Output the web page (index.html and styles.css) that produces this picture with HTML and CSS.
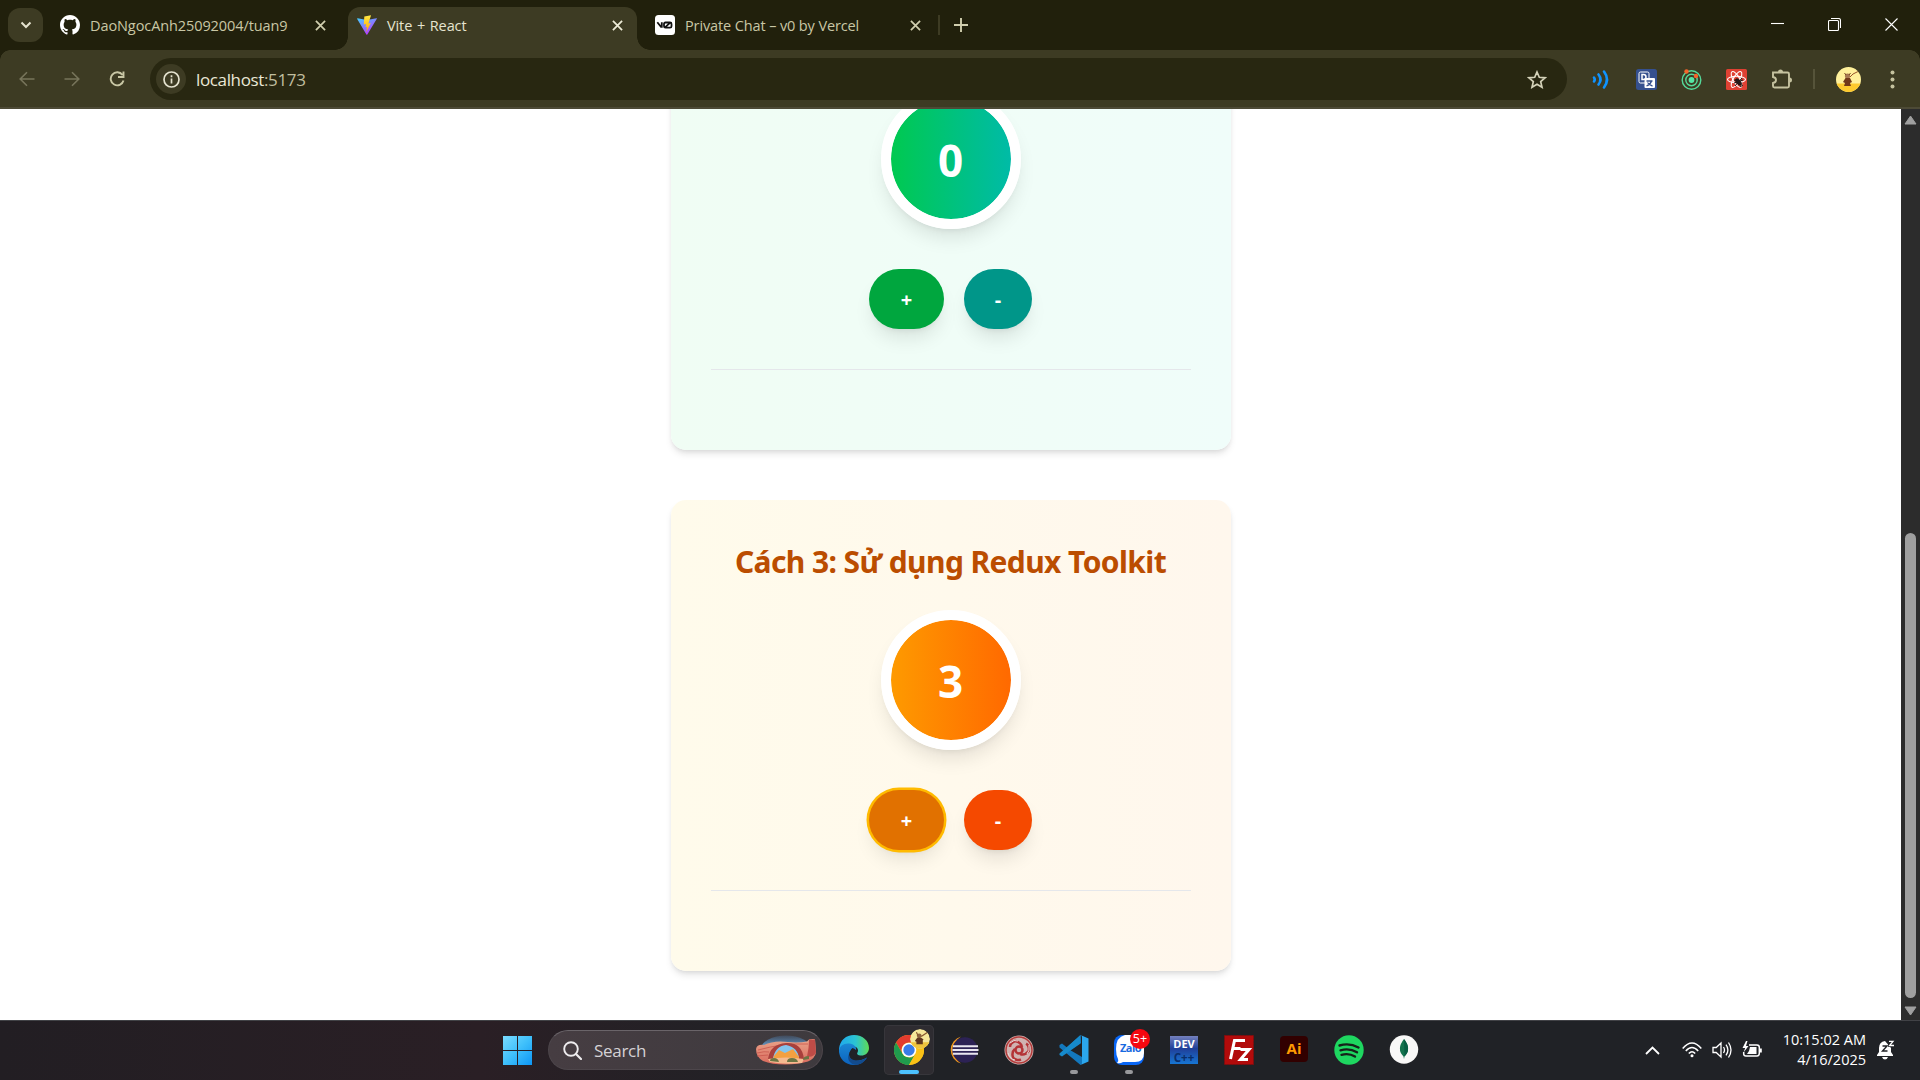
FILE: index.html
```html
<!DOCTYPE html>
<html lang="vi">
<head>
<meta charset="utf-8">
<title>Vite + React</title>
<link rel="stylesheet" href="styles.css">
</head>
<body>
<div class="screen">
  <header class="tabstrip">
    <div class="tab-search"><svg width="12" height="8" viewBox="0 0 12 8"><path d="M1.5 1.5 6 6l4.500-4.500" fill="none" stroke="#e5e3cf" stroke-width="2"/></svg></div>
    <div class="tab tab-first">
      <svg class="fav" viewBox="0 0 16 16"><path fill="#fff" d="M8 0C3.580 0 0 3.580 0 8c0 3.540 2.290 6.530 5.470 7.590.4.070.55-.17.55-.38 0-.19-.01-.82-.01-1.490-2.010.37-2.530-.49-2.690-.94-.09-.23-.48-.94-.82-1.130-.28-.15-.68-.52-.01-.53.63-.01 1.080.58 1.230.82.72 1.210 1.870.87 2.330.66.07-.52.28-.87.51-1.070-1.780-.2-3.640-.89-3.640-3.950 0-.87.31-1.590.82-2.150-.08-.2-.36-1.020.08-2.120 0 0 .67-.21 2.200.82.64-.18 1.320-.27 2-.27s1.360.09 2 .27c1.530-1.040 2.200-.82 2.200-.82.44 1.100.16 1.920.08 2.120.51.56.82 1.270.82 2.150 0 3.070-1.870 3.750-3.650 3.950.29.25.54.73.54 1.480 0 1.070-.01 1.930-.01 2.200 0 .21.15.46.55.38A8.010 8.010 0 0 0 16 8c0-4.420-3.580-8-8-8z"/></svg>
      <span class="tab-title t-git">DaoNgocAnh25092004/tuan9</span>
      <svg class="tab-close" viewBox="0 0 12 12"><path d="M1 1l10 10M11 1 1 11"/></svg>
    </div>
    <div class="tab tab-active">
      <svg class="fav" viewBox="0 0 32 32"><defs><linearGradient id="vg" x1="0" y1="0" x2=".6" y2="1"><stop offset="0" stop-color="#41d1ff"/><stop offset="1" stop-color="#bd34fe"/></linearGradient><linearGradient id="vy" x1="0" y1="0" x2="0" y2="1"><stop offset="0" stop-color="#ffea45"/><stop offset="1" stop-color="#ffa800"/></linearGradient></defs><path d="M1 5 16 8 31 5c1 0 1 1 .5 1.500L16.500 31c-.5 1-1 1-1.500 0L.3 6.300C0 5.500.3 5 1 5z" fill="url(#vg)"/><path d="M22.500.2 11.700 2.300l-.8 12.300c0 .4.300.600.700.500l3-.7-1 5.200 2.500-.6-1.400 8.500 7.300-14.600-3.800.600z" fill="url(#vy)"/></svg>
      <span class="tab-title t-vite">Vite + React</span>
      <svg class="tab-close" viewBox="0 0 12 12"><path d="M1 1l10 10M11 1 1 11"/></svg>
    </div>
    <div class="tab tab-last">
      <svg class="fav" viewBox="0 0 20 20"><rect width="20" height="20" rx="3.500" fill="#fff"/><path d="M2.300 7.300 6 11.800h.8V7.300M9 9q0-1.500 1.500-1.500H15q1.500 0 1.500 1.500v2.200q0 1.500-1.500 1.500h-4.500Q9 12.700 9 11.200zM10 12.300l5-4.500" fill="none" stroke="#111" stroke-width="1.800"/></svg>
      <span class="tab-title t-v0">Private Chat – v0 by Vercel</span>
      <svg class="tab-close" viewBox="0 0 12 12"><path d="M1 1l10 10M11 1 1 11"/></svg>
    </div>
    <i class="tab-sep"></i>
    <svg class="new-tab" width="14" height="14" viewBox="0 0 14 14"><path d="M7 0v14M0 7h14" stroke="#d0ceae" stroke-width="1.900"/></svg>
    <div class="window-controls">
      <svg width="13" height="13" viewBox="0 0 13 13"><path d="M0 5.500h13"/></svg>
      <svg width="13" height="13" viewBox="0 0 13 13"><rect x=".5" y="2.500" width="10" height="10" rx="1"/><path d="M3 .5h7.500a2 2 0 0 1 2 2V10"/></svg>
      <svg width="13" height="13" viewBox="0 0 13 13"><path d="m.5.5 12 12m0-12-12 12"/></svg>
    </div>
  </header>

  <nav class="toolbar">
    <svg class="nav-icon dim" viewBox="0 0 16 16"><path d="M15.500 8H1.500M8 1.200 1.200 8 8 14.800"/></svg>
    <svg class="nav-icon dim" viewBox="0 0 16 16"><path d="M.5 8h14M8 1.200 14.800 8 8 14.800"/></svg>
    <svg class="nav-icon" viewBox="0 0 16 16"><path d="M13.500 4A6.500 6.500 0 1 0 14.500 9.500M14.500.5V6H9"/></svg>
    <div class="omnibox">
      <span class="site-info"><svg width="17" height="17" viewBox="0 0 17 17"><circle cx="8.500" cy="8.500" r="7.500" fill="none" stroke="#e5e3cf" stroke-width="1.700"/><path d="M8.500 7.500v5M8.500 4.300v2" stroke="#e5e3cf" stroke-width="1.700"/></svg></span>
      <span class="url">localhost<span class="port">:5173</span></span>
      <svg class="star" width="20" height="19" viewBox="0 0 20 19"><path d="m10 2 2.300 5.300 5.700.5-4.300 3.800 1.300 5.600-5-3-5 3 1.300-5.600L2 7.800l5.700-.5z" fill="none" stroke="#d4d2b9" stroke-width="1.700"/></svg>
    </div>
    <div class="extensions">
      <svg class="ext" viewBox="0 0 21 21" fill="none" stroke="#0f93ff" stroke-width="2.600" stroke-linecap="round"><path d="M3 8.500q1.500 2 0 4M7.500 5.500q4 5 0 10M13 2.500q6 8 0 16"/></svg>
      <svg class="ext" viewBox="0 0 21 21"><rect width="21" height="21" rx="2.500" fill="#35508f"/><rect x="3" y="3" width="10" height="11" rx="1.500" fill="#35508f" stroke="#fff"/><path d="M6 5.500v5h1.500q2.500 0 2.500-2.500T7.500 5.500z" fill="none" stroke="#fff" stroke-width="1.500"/><rect x="8.500" y="9" width="10.500" height="10" rx="1" fill="#fff"/><path d="M10.500 12h6M15.500 12q-1 3.500-5 5M11.500 13.500q2 3 5 3.500" fill="none" stroke="#35508f" stroke-width="1.300"/></svg>
      <svg class="ext" viewBox="0 0 21 21" fill="none" stroke="#55d99a" stroke-width="1.400"><circle cx="10.500" cy="11" r="9.300"/><circle cx="10.500" cy="11" r="5.700"/><circle cx="10.500" cy="11" r="2.900" fill="#55e6a5" stroke="none"/><circle cx="5.500" cy="2.500" r="2.200" fill="#f4642b" stroke="none"/><circle cx="15" cy="7" r="2.200" fill="#f4642b" stroke="none"/></svg>
      <svg class="ext" viewBox="0 0 21 21"><rect width="21" height="21" rx="1.500" fill="#df4133"/><g fill="none" stroke="#fff" stroke-width="1.100"><ellipse cx="10.500" cy="10.500" rx="9" ry="3.300"/><ellipse cx="10.500" cy="10.500" rx="9" ry="3.300" transform="rotate(60 10.500 10.500)"/><ellipse cx="10.500" cy="10.500" rx="9" ry="3.300" transform="rotate(120 10.500 10.500)"/></g><ellipse cx="12.500" cy="13" rx="2.300" ry="4.300" transform="rotate(-40 12.500 13)" fill="#241916"/><path d="m8 14 9-3M9 17l7-8M14 18l3-2M8 11l4 1" stroke="#241916" stroke-width="1"/></svg>
      <svg class="ext" viewBox="0 0 21 21"><path d="M3 3.500h13.500q1.500 0 1.500 1.500v12q0 1.500-1.500 1.500H3.500Q2 18.500 2 17v-3q3-.5 3-3T2 8V3.500z" fill="none" stroke="#c5c29f" stroke-width="1.900"/><path d="M7 3a2.500 2.500 0 0 1 5 0M18.500 8.500a2.500 2.500 0 0 1 0 5" fill="#c5c29f"/></svg>
    </div>
    <i class="bar-sep"></i>
    <svg class="avatar" viewBox="0 0 25 25"><defs><clipPath id="avc"><circle cx="12.500" cy="12.500" r="12.500"/></clipPath></defs><g clip-path="url(#avc)"><path fill="#fff09b" d="M0 0h25v25H0z"/><path fill="#fdc92e" d="M0 16.500h25V25H0z"/><circle cx="11.500" cy="9" r="2.600" fill="#a77752"/><path d="m9.500 11-2.500 4 2 1-1 3h7l-1-3 2-1-2-4z" fill="#713719"/><path d="M14 10 17 7 22 4.500" fill="none" stroke="#96532b"/><path d="m8.500 6 1.500 2M14.500 6 13 8" stroke="#74401d"/></g></svg>
    <svg class="menu" width="5" height="19" viewBox="0 0 5 19" fill="#c5c29f"><circle cx="2.500" cy="2.500" r="2"/><circle cx="2.500" cy="9.500" r="2"/><circle cx="2.500" cy="16.500" r="2"/></svg>
  </nav>

  <div class="viewport">
    <main class="page">
      <section class="card card-green">
        <div class="count">0</div>
        <div class="buttons"><button class="btn plus">+</button><button class="btn minus">-</button></div>
        <hr class="rule">
      </section>
      <section class="card card-amber">
        <h2 class="card-title">Cách 3: Sử dụng Redux Toolkit</h2>
        <div class="count">3</div>
        <div class="buttons"><button class="btn plus ring">+</button><button class="btn minus">-</button></div>
        <hr class="rule">
      </section>
    </main>
    <aside class="scrollbar">
      <svg width="13" height="10" viewBox="0 0 13 10"><path d="M6.500 1 12 9H1z" fill="#a0a0a0" stroke="#a0a0a0" stroke-linejoin="round"/></svg>
      <i class="thumb"></i>
      <svg width="13" height="10" viewBox="0 0 13 10"><path d="M6.500 9 12 1H1z" fill="#a0a0a0" stroke="#a0a0a0" stroke-linejoin="round"/></svg>
    </aside>
  </div>

  <footer class="taskbar">
    <div class="apps">
      <div class="slot"><svg width="29" height="29" viewBox="0 0 29 29"><defs><linearGradient id="wg" x1="0" y1="0" x2="1" y2="1"><stop offset="0" stop-color="#7adcff"/><stop offset=".5" stop-color="#3fc0fb"/><stop offset="1" stop-color="#0d96f5"/></linearGradient></defs><path d="M0 0h14v14H0zM15 0h14v14H15zM0 15h14v14H0zM15 15h14v14H15z" fill="url(#wg)"/></svg></div>
      <div class="search">
        <svg class="lens" width="19" height="19" viewBox="0 0 19 19"><circle cx="8" cy="8" r="6.800" fill="none" stroke="#eeecee" stroke-width="1.900"/><path d="m13 13 5 5" stroke="#eeecee" stroke-width="2.200" stroke-linecap="round"/></svg>
        <span class="search-text">Search</span>
        <svg class="arch" width="60" height="30" viewBox="0 0 60 30"><defs><linearGradient id="sky" x1="0" y1="0" x2="0" y2="1"><stop offset="0" stop-color="#4c7cae" stop-opacity=".25"/><stop offset=".4" stop-color="#6ea1cd"/></linearGradient><linearGradient id="rock" x1="0" y1="0" x2="0" y2="1"><stop offset="0" stop-color="#eba58a"/><stop offset="1" stop-color="#d9695c"/></linearGradient></defs><ellipse cx="30" cy="14" rx="25" ry="13.500" fill="url(#sky)"/><path d="M0 14q1-5 8-4 10-5 24-3 10 1 19-.5l2-2q5-1 6 0l1 13q-1 6-8 9-10 3-23 3T7 26Q0 22 0 14z" fill="url(#rock)"/><path d="M2 15q25-7 50-6M1 18q8-2 12-1M1 21l11-1" stroke="#c9574c" fill="none" stroke-width=".8"/><path d="M53 4.500h6l1 13q-2 5-9 4 2-8 2-17z" fill="#bf4c47"/><path d="M12 24q2-15 18-16t18 16l-5 1q0-11-13-14Q18 13 17 25z" fill="#a8403c"/><path d="M17 24Q19 11 30 10q12 2 13 14z" fill="#83c4ee"/><path d="m18 21 5-6 6 3 8-4 6 8v3H17z" fill="#f3a041"/><path d="M12 24q18-3 36 0l-2 4q-18 2-32-1z" fill="#f5ba90"/><path d="M14 26q0-3 4-3t5 4zM31 27q0-4 5-4t6 4zM47 25q0-4 6-4v3z" fill="#6b7543"/></svg>
      </div>
      <div class="slot"><svg width="30" height="30" viewBox="0 0 30 30"><defs><linearGradient id="e1" x1="0" y1=".3" x2="1" y2=".3"><stop offset="0" stop-color="#1fa8ed"/><stop offset=".55" stop-color="#2bc3d2"/><stop offset="1" stop-color="#5fdc55"/></linearGradient><linearGradient id="e2" x1="0" y1="0" x2="0" y2="1"><stop offset="0" stop-color="#1a87d4"/><stop offset="1" stop-color="#0c62bd"/></linearGradient></defs><path d="M0 14C1 5 7 0 15 0c9 0 15 6 15 13 0 5-4 7.500-7.500 7.500-4 0-5-1.500-4-3 1.500-2.500 0-6-5-6.500C7 10.500 2 14 0 18z" fill="url(#e1)"/><path d="M0 16c0-5 5-8 10-7.500 5 .5 8 3.500 7 7-3-2-7 0-7 4 0 6 7 9 18 3-3 5-7.500 7.500-13 7.500C6 30 0 23 0 16z" fill="url(#e2)"/><path d="M10 19c0 6 8 9.500 18 3.500-3 5-7 7-11 7.500-6-1-9.500-5.500-7-11z" fill="#124b8d"/><path d="M13.500 13c-2 1.500-3 4-2 6 1.500 3 5 4.500 9 4.500-3-.5-4.500-3-2.500-6 0-2-2-4-4.500-4.500z" fill="#202127"/></svg></div>
      <div class="slot active"><svg width="30" height="30" viewBox="0 0 30 30"><circle cx="15" cy="15" r="15" fill="#f4bd1d"/><path d="M2 7.500A15 15 0 0 1 28 7.500H15a7.500 7.500 0 0 0-6.500 11.200z" fill="#e33b2e"/><path d="M2 7.500 8.500 18.700A7.500 7.500 0 0 0 15 22.500L15 30A15 15 0 0 1 2 7.500z" fill="#209b4d"/><path d="M15 30 21.500 18.700a7.500 7.500 0 0 1-8 3.700l-2.500 7z" fill="#209b4d"/><path d="M28 7.500A15 15 0 0 1 15 30l6.500-11.300A7.500 7.500 0 0 0 21 10.500V7.500z" fill="#fbc116"/><circle cx="15" cy="15" r="7.300" fill="#fff"/><circle cx="15" cy="15" r="5.700" fill="#3a7ce8"/></svg>
        <svg class="badge" width="20" height="20" viewBox="0 0 25 25"><g clip-path="url(#avc)"><path fill="#f6e799" d="M0 0h25v25H0z"/><path fill="#efc43d" d="M0 16.500h25V25H0z"/><circle cx="11.500" cy="8.500" r="3" fill="#8b633f"/><path d="m9 11-3 4 2 1v3h8v-5l1-1-3-2z" fill="#60371f"/><path d="M14 9.500 22 4M8 4l2 4" stroke="#86552d" stroke-width="1.500"/></g></svg><i class="run wide"></i></div>
      <div class="slot"><svg width="30" height="30" viewBox="0 0 30 30"><path d="M12 1.500A14 14 0 0 0 12 28.500 16 16 0 0 1 12 1.500z" fill="#f39a20"/><circle cx="16" cy="15" r="12.700" fill="#2c2255"/><path d="M4 11.300h25M3.500 15h26M4 18.700h25" stroke="#e9e7f1" stroke-width="2"/></svg></div>
      <div class="slot"><svg width="30" height="30" viewBox="0 0 30 30"><circle cx="15" cy="15" r="14.500" fill="#d0b3b1"/><circle cx="15" cy="15" r="13" fill="none" stroke="#b43c3b" stroke-width="1.500"/><g fill="none" stroke="#b43336" stroke-width="2.500"><circle cx="15" cy="15" r="3.500"/><path id="sw" d="M18 12q-1-5-7-6-5 2-5 6"/><use href="#sw" transform="rotate(120 15 15)"/><use href="#sw" transform="rotate(240 15 15)"/></g><path d="M6 8q4-4 8-2M25 10q1 6-2 9M11 25q-5-1-7-7" stroke="#e9dcda" fill="none"/></svg></div>
      <div class="slot"><svg width="30" height="30" viewBox="0 0 30 30"><path d="M21.500 0 8 12.500 3 8.500.5 10v2.500L21.500 30 23 29V22L11 15 22 8z" fill="#1378bd"/><path d="M.5 18.500 21.500 0v8.500L3 21.500.5 20z" fill="#168acb"/><path d="m21.500 0 8 3.500V26.500l-8 3.500q1.500-.5 1.500-2V2q0-1.500-1.500-2z" fill="#2ba7ee"/></svg><i class="run"></i></div>
      <div class="slot"><svg width="30" height="30" viewBox="0 0 30 30"><rect width="30" height="30" rx="8" fill="#0866f5"/><path d="M11 0h11q8 0 8 8v10q0 9-9 9H9q-3 2-6 1 2-2 1-4-2-4-2-10Q2 2 11 0z" fill="#fff"/></svg><b class="zalo">Zalo</b><b class="badge count-badge">5+</b><i class="run"></i></div>
      <div class="slot"><div class="dev"><span>DEV</span><span class="cpp">C++</span></div></div>
      <div class="slot"><svg width="30" height="30" viewBox="0 0 30 30"><rect x=".5" y=".5" width="29" height="29" fill="#b20b0b" stroke="#850b0b" stroke-dasharray="2 1"/><path d="M6.500 24 10.500 5.500H21M9 13.500h7.500M16.500 14.500H25L16.500 24.500H24" fill="none" stroke="#fff" stroke-width="3"/></svg></div>
      <div class="slot"><div class="ai">Ai</div></div>
      <div class="slot"><svg width="30" height="30" viewBox="0 0 30 30"><circle cx="15" cy="15" r="14.700" fill="#1ed760"/><path d="M5.500 10.500q10-3 19 2M6.500 15.300q9-2.500 16.500 2M7.500 19.800q7.500-2 13.500 1.700" fill="none" stroke="#16221a" stroke-width="2.400" stroke-linecap="round"/></svg></div>
      <div class="slot"><svg width="30" height="30" viewBox="0 0 30 30"><circle cx="15" cy="14.500" r="14.200" fill="#f8f8f7"/><path d="M15 4q8 10 .5 17.500L15 24l-.5-2.500Q7 14 15 4z" fill="#13734d"/><path d="M15 4q8 10 .5 17.500z" fill="#075f43"/></svg></div>
    </div>
    <div class="tray">
      <svg class="chev" width="15" height="9" viewBox="0 0 15 9"><path d="m1 8 6.500-6.500L14 8" fill="none" stroke="#fff" stroke-width="1.800"/></svg>
      <svg class="sys" width="20" height="16" viewBox="0 0 20 16" fill="none" stroke="#fff" stroke-width="1.500"><path d="M.7 6.500q9.300-11 18.600 0M3.800 9q6.200-7 12.400 0M6.800 11.500q3.200-3.500 6.400 0"/><circle cx="10" cy="13.800" r="1.500" fill="#fff" stroke="none"/></svg>
      <svg class="sys" width="20" height="18" viewBox="0 0 20 18" fill="none" stroke="#fff" stroke-width="1.300"><path d="M1 6.500h3.200L9 2v14l-4.800-4.500H1zM11.500 6q2 3 0 6M14 3.700q3.800 5.300 0 10.600M16.500 1.500q5 7.500 0 15"/></svg>
      <svg class="sys" width="20" height="18" viewBox="0 0 20 18"><path d="M7 4h8q2.300 0 2.300 2.300v6Q17.300 15 15 15H4q-2.300 0-2.300-2.300V11" fill="none" stroke="#fff" stroke-width="1.500"/><path d="M8 6h6.500v7H5l2-3zM18 7.500h1.800v4H18zM4 0 .5 7h2.700L1.500 11.500 6.500 5H4l1.500-5z" fill="#fff"/></svg>
      <div class="clock"><span class="time">10:15:02 AM</span><span class="date">4/16/2025</span></div>
      <svg class="bell" width="18" height="20" viewBox="0 0 18 20"><path d="M8 1Q2 2 2 8v4L0 15v1h16v-1l-2-3V8z" fill="#fff"/><path d="M5 17h6q-1 2.500-3 2.500T5 17z" fill="#fff"/><path d="M11 0h7v7h-7z" fill="#202226"/><path d="M12 1.300h4L12.500 5.500H17" fill="none" stroke="#fff" stroke-width="1.300"/><path d="M5.500 6h4.500l-4.500 5h5" fill="none" stroke="#202226" stroke-width="1.400"/></svg>
    </div>
  </footer>
</div>
</body>
</html>
```
FILE: styles.css
```css
* { box-sizing: border-box; }
body { margin: 0; overflow: hidden; font-family: "Open Sans", "Noto Sans", sans-serif; }
svg { display: block; flex: none; }
.screen { width: 1920px; height: 1080px; display: flex; flex-direction: column; background: #fff; }

.tabstrip { height: 50px; flex: none; display: flex; align-items: center; background: #21200c; }
.tab-search { width: 35px; height: 34px; margin-left: 8px; border-radius: 12px; background: #3d3b23; display: grid; place-items: center; }
.tab { display: flex; align-items: center; height: 100%; }
.tab-first { width: 305px; padding: 0 22px 0 17px; }
.tab-active { position: relative; align-self: flex-end; width: 289px; height: 43px; padding: 0 14px 7px 9px; border-radius: 12px 12px 0 0; background: #3d3b23; }
.tab-active::before, .tab-active::after { content: ""; position: absolute; bottom: 0; width: 13px; height: 13px; }
.tab-active::before { left: -13px; background: radial-gradient(circle at 0 0, transparent 12.500px, #3d3b23 13px); }
.tab-active::after { right: -13px; background: radial-gradient(circle at 100% 0, transparent 12.500px, #3d3b23 13px); }
.tab-last { width: 301px; padding: 0 17px 0 18px; }
.fav { width: 20px; height: 20px; margin-right: 10px; }
.tab-title { flex: 1; padding-top: 1px; font-size: 14.500px; line-height: 20px; white-space: nowrap; color: #c9c7a5; }
.tab-active .tab-title { color: #e6e4d0; }
.t-git { letter-spacing: -.09px; }
.t-vite { letter-spacing: 0.120px; word-spacing: 1px; letter-spacing: -.1px; }
.t-v0 { letter-spacing: -.12px; }
.tab-close { width: 11px; height: 11px; stroke: #d0ceae; stroke-width: 1.900; }
.tab-active .tab-close { stroke: #eeecd8; }
.tab-sep { width: 2px; height: 20px; background: #3d3b23; }
.new-tab { margin-left: 14px; }
.window-controls { margin-left: auto; margin-right: 22px; display: flex; gap: 44px; fill: none; stroke: #fff; stroke-width: 1.100; }
.window-controls svg { margin-bottom: 1px; }

.toolbar { height: 59px; flex: none; display: flex; align-items: center; padding: 1px 25px 0 19px; background: radial-gradient(circle at 10px 10px, #3d3b23 9.500px, #21200c 10px) 0 0 / 10px 10px no-repeat, radial-gradient(circle at 0 10px, #3d3b23 9.500px, #21200c 10px) 100% 0 / 10px 10px no-repeat, #3d3b23; border-bottom: 2px solid #4d4a36; }
.nav-icon { width: 16px; height: 16px; margin-right: 29px; fill: none; stroke: #c9c7a5; stroke-width: 1.900; }
.nav-icon.dim { stroke: #77755b; stroke-width: 1.600; }
.omnibox { width: 1417px; height: 42px; margin-left: -4px; border-radius: 21px; background: #282711; display: flex; align-items: center; padding: 0 20px 0 6px; }
.site-info { width: 30px; height: 30px; border-radius: 50%; background: #3d3b23; display: grid; place-items: center; }
.url { flex: 1; margin-left: 10px; font-size: 17px; letter-spacing: -.36px; color: #eae8d6; }
.port { color: #c0be9f; }
.extensions { display: flex; gap: 24px; margin: 1px 0 0 24px; }
.ext { width: 21px; height: 21px; }
.bar-sep { width: 2px; height: 20px; margin-left: 21px; background: #56543a; }
.avatar { width: 25px; height: 25px; margin-left: 21px; }
.menu { margin-left: auto; }

.viewport { flex: 1; min-height: 0; display: flex; }
.page { flex: 1; overflow: hidden; display: flex; flex-direction: column; justify-content: flex-end; align-items: center; gap: 50px; padding-bottom: 49px; background: #fff; }
.card { flex: none; width: 560px; padding: 40px 40px 80px; border-radius: 15px; text-align: center; box-shadow: 0 5px 7.500px -1.250px #0000001a, 0 2.500px 5px -2.500px #0000001a; }
.card-green { background: linear-gradient(90deg, #f0fdf4, #f0fdfa); }
.card-amber { background: linear-gradient(90deg, #fffbeb, #fff7ed); }
.card-title { margin: 0 0 28px; padding-top: 2px; font: 700 30px/40px "Noto Sans", sans-serif; letter-spacing: -.6px; white-space: nowrap; color: #bb4d00; }
.count { width: 140px; height: 140px; margin: 0 auto; border: 10px solid #fff; border-radius: 50%; background: linear-gradient(90deg, #fe9a00, #ff6900) padding-box; color: #fff; font: 700 44px/123px "Noto Sans", sans-serif; box-shadow: 0 12.500px 18.750px -3.750px #0000001a, 0 5px 7.500px -5px #0000001a; }
.card-green .count { background: linear-gradient(90deg, #00c950, #00bba7) padding-box; }
.buttons { display: flex; justify-content: center; gap: 20px; margin: 40px 0; }
.btn { height: 60px; padding: 2px 0 0; border: 0; border-radius: 30px; color: #fff; font: 700 20px/58px "Open Sans", sans-serif; box-shadow: 0 12.500px 18.750px -3.750px #0000001a, 0 5px 7.500px -5px #0000001a; }
.plus { width: 75px; background: #e17100; }
.minus { width: 68px; background: #f54900; }
.ring { box-shadow: 0 0 0 2.500px #ffba00, 0 12.500px 18.750px -3.750px #0000001a, 0 5px 7.500px -5px #0000001a; }
.card-green .plus { background: #00a63e; }
.card-green .minus { background: #009689; }
.rule { height: 1px; margin: 0; border: 0; background: #e5e7eb; }

.scrollbar { width: 19px; display: flex; flex-direction: column; align-items: center; padding: 6px 0 4px; background: #2c2c2c; }
.thumb { width: 11px; height: 465px; margin: auto 0 8px; border-radius: 6px; background: #9f9f9f; }

.taskbar { height: 60px; flex: none; display: flex; justify-content: space-between; border-top: 1px solid #414246; background: linear-gradient(90deg, #221e23 0, #2a1f25 25%, #29202600 42%), #202226; }
.apps { display: flex; gap: 5px; padding: 4px 0 0 492px; }
.slot { position: relative; width: 50px; height: 50px; display: grid; place-items: center; }
.slot.active { border-radius: 5px; background: #2e2c31; box-shadow: inset 0 0 0 1px #37363b; }
.search { width: 275px; height: 40px; margin: 5px 1px 0; border-radius: 20px; background: linear-gradient(90deg, #463d42, #3e3a3e); border: 1px solid #4d464b; border-top-color: #6a6469; display: flex; align-items: center; padding: 0 6px 0 14px; }
.search-text { flex: 1; margin-left: 12px; font-size: 17px; letter-spacing: -.3px; color: #d5d2d5; }
.badge { position: absolute; left: 26px; top: 4px; width: 20px; height: 20px; border-radius: 50%; }
.count-badge { background: #f50810; color: #fff; font: 400 12.500px/19px "Open Sans", sans-serif; text-align: center; }
.zalo { position: absolute; left: 16px; top: 15px; font: 700 11px/16px "Open Sans", sans-serif; letter-spacing: -.5px; color: #1769e0; }
.run { position: absolute; left: 21px; bottom: 1px; width: 8px; height: 4px; border-radius: 2px; background: #98999c; }
.run.wide { left: 15px; width: 20px; background: #4cc2ff; }
.dev { width: 28px; height: 28px; display: flex; flex-direction: column; align-items: center; background: linear-gradient(#7380bd, #203f99 45%, #1776d3); color: #fff; font: 700 11px/15px "Open Sans", sans-serif; }
.cpp { color: #092d6a; font-size: 11.500px; line-height: 13px; }
.ai { width: 28px; height: 26px; margin-top: -2px; border-radius: 4px; background: #310000; color: #ff9a00; font: 700 15px/25px "Open Sans", sans-serif; text-align: center; }
.tray { display: flex; align-items: center; padding-right: 25px; padding-bottom: 1px; }
.chev { margin-right: 22px; }
.sys { margin-right: 10px; }
.clock { width: 94px; display: flex; flex-direction: column; align-items: flex-end; color: #fff; font-size: 14.500px; line-height: 20px; letter-spacing: 0; white-space: nowrap; }
.bell { margin-left: 11px; }
```
